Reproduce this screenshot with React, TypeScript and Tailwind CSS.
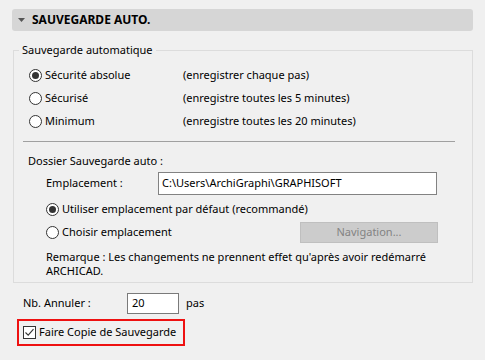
import React from 'react';

const font = { fontFamily: '"Noto Sans", "Open Sans", sans-serif' };

function Radio({ checked }: { checked?: boolean }) {
  return (
    <span className="flex h-[13px] w-[13px] shrink-0 items-center justify-center rounded-full border border-[#333] bg-white">
      {checked && <span className="h-[7px] w-[7px] rounded-full bg-[#333]" />}
    </span>
  );
}

function Checkbox() {
  return (
    <span className="flex h-[13px] w-[13px] shrink-0 items-center justify-center border border-[#333] bg-white">
      <svg width="11" height="11" viewBox="0 0 11 11">
        <path d="M1.5 5.5 L4.2 8.2 L9.5 2.2" fill="none" stroke="#333" strokeWidth="1.1" />
      </svg>
    </span>
  );
}

const modes = [
  { label: 'Sécurité absolue', note: '(enregistrer chaque pas)', checked: true },
  { label: 'Sécurisé', note: '(enregistre toutes les 5 minutes)' },
  { label: 'Minimum', note: '(enregistre toutes les 20 minutes)' },
];

export default function App() {
  return (
    <div className="h-[360px] w-[485px] whitespace-nowrap bg-[#f0f0f0] pt-[9px] text-[11px] text-black" style={font}>
      <div className="ml-[12px] flex h-[22px] w-[461px] items-center rounded-[3px] bg-[#d6d6d6] pl-[6px]">
        <svg width="7" height="4" viewBox="0 0 7 4" className="mr-[7px]">
          <path d="M0 0 H7 L3.5 4 Z" fill="#555" />
        </svg>
        <span className="text-[12px] font-bold">SAUVEGARDE AUTO.</span>
      </div>

      <fieldset className="ml-[13px] mt-[11px] w-[460px] border border-[#dcdcdc] p-0 pb-[4px]">
        <legend className="ml-[5px] px-[3px] leading-[16px]">Sauvegarde automatique</legend>
        <div className="pl-[15px] pt-[6px]">
          {modes.map((m) => (
            <div key={m.label} className="flex h-[23px] items-center">
              <Radio checked={m.checked} />
              <span className="ml-[3px] w-[138px]">{m.label}</span>
              <span>{m.note}</span>
            </div>
          ))}
        </div>
        <div className="ml-[9px] mt-[8px] h-px w-[432px] bg-[#a0a0a0]" />
        <div className="ml-[14px] mt-[11px] leading-[16px]">Dossier Sauvegarde auto :</div>
        <div className="ml-[32px] mt-[3px] flex items-center">
          <span className="w-[112px]">Emplacement :</span>
          <div className="flex h-[23px] w-[279px] items-center border border-[#828282] bg-white pl-[3px]">
            C:\Users\ArchiGraphi\GRAPHISOFT
          </div>
        </div>
        <div className="ml-[32px] mt-[3px] flex h-[23px] items-center">
          <Radio checked />
          <span className="ml-[3px]">Utiliser emplacement par défaut (recommandé)</span>
        </div>
        <div className="ml-[32px] flex h-[23px] items-center">
          <Radio />
          <span className="ml-[3px] w-[238px]">Choisir emplacement</span>
          <div className="flex h-[21px] w-[138px] items-center justify-center border border-[#bfbfbf] bg-[#cccccc] text-[#838383]">
            Navigation...
          </div>
        </div>
        <p className="ml-[32px] mt-[6px] leading-[14px]">
          Remarque : Les changements ne prennent effet qu'après avoir redémarré
          <br />
          ARCHICAD.
        </p>
      </fieldset>

      <div className="ml-[23px] mt-[10px] flex items-center">
        <span className="w-[104px]">Nb. Annuler :</span>
        <div className="flex h-[21px] w-[52px] items-center border border-[#7a7a7a] bg-white pl-[4px]">20</div>
        <span className="ml-[7px]">pas</span>
      </div>

      <div className="ml-[17px] mt-[5px] flex h-[27px] w-[168px] items-center border-2 border-[#ee1111] pl-[4px]">
        <Checkbox />
        <span className="ml-[3px]">Faire Copie de Sauvegarde</span>
      </div>
    </div>
  );
}
